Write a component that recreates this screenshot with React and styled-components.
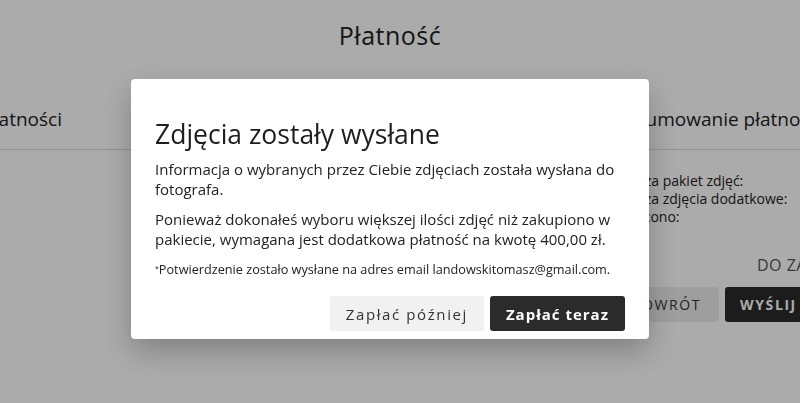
import React from 'react'
import styled, { createGlobalStyle } from 'styled-components'

const GlobalStyle = createGlobalStyle`
    html, body {
        margin: 0;
        padding: 0;
        background: #ffffff;
        overflow: hidden;
    }
    body {
        font-family: "Open Sans", "Liberation Sans", sans-serif;
        color: #222222;
    }
`;

const StyledPage = styled.div`
    width: 1020px;
    height: 403px;
    margin-left: -120px;
    display: flex;
    flex-direction: column;
`;

const StyledPageTitle = styled.h1`
    margin: 18px 0 0;
    font-size: 25px;
    font-weight: 500;
    letter-spacing: 0.5px;
    text-align: center;
    color: #222;
`;

const StyledTabs = styled.div`
    display: grid;
    grid-template-columns: 300px 1fr 300px;
    margin-top: 54px;
    border-bottom: 1px solid #dcdcdc;
    padding-bottom: 17px;
`;

const StyledTab = styled.div`
    font-size: 19px;
    color: #222;
    text-align: ${({ align }) => align};
    padding: ${({ align }) => align === 'right' ? '0 118px 0 0' : '0 0 0 2px'};
`;

const StyledSummary = styled.div`
    margin: 22px 0 0 728px;
    display: flex;
    flex-direction: column;
`;

const StyledSummaryRow = styled.div`
    font-size: 14px;
    line-height: 18px;
    color: #222;
`;

const StyledDue = styled.div`
    margin: 28px 0 0 149px;
    font-size: 16px;
    letter-spacing: 0.5px;
    color: #555;
`;

const StyledPageActions = styled.div`
    display: flex;
    gap: 6px;
    margin: 11px 0 0 6px;
`;

const StyledPageButton = styled.button`
    height: 35px;
    padding: 0 ${({ dark }) => dark ? '15px' : '18px'};
    border: none;
    border-radius: 3px;
    font-family: inherit;
    font-size: 14px;
    font-weight: ${({ dark }) => dark ? 700 : 500};
    letter-spacing: 1.6px;
    background: ${({ dark }) => dark ? '#2b2b2b' : '#ececec'};
    color: ${({ dark }) => dark ? '#ffffff' : '#333'};
`;

const StyledOverlay = styled.div`
    position: fixed;
    inset: 0;
    background: rgba(0, 0, 0, 0.33);
    display: flex;
    justify-content: center;
    align-items: flex-start;
    padding-top: 79px;
`;

const StyledModal = styled.div`
    box-sizing: border-box;
    width: 518px;
    margin-left: -20px;
    padding: 38px 24px 8px;
    background: #ffffff;
    border-radius: 4px;
    box-shadow: 0 12px 30px rgba(0, 0, 0, 0.25);
`;

const StyledModalTitle = styled.h2`
    margin: 0 0 8px;
    font-size: 26.5px;
    font-weight: 500;
    line-height: 34px;
    color: #1e1e1e;
`;

const StyledText = styled.p`
    margin: 0 0 10px;
    font-size: 15px;
    line-height: 20px;
    color: #222;
`;

const StyledNote = styled.p`
    margin: 12px 0 0;
    font-size: 12.7px;
    line-height: 16px;
    color: #222;
    sup {
        font-size: 7px;
        vertical-align: top;
    }
`;

const StyledModalActions = styled.div`
    display: flex;
    justify-content: flex-end;
    gap: 6px;
    margin-top: 19px;
`;

const StyledModalButton = styled.button`
    height: 35px;
    padding: 0 16px;
    border: none;
    border-radius: 3px;
    font-family: inherit;
    font-size: 15px;
    font-weight: ${({ primary }) => primary ? 700 : 500};
    letter-spacing: ${({ primary }) => primary ? '1px' : '1.6px'};
    background: ${({ primary }) => primary ? '#2b2b2b' : '#f1f1f1'};
    color: ${({ primary }) => primary ? '#ffffff' : '#333'};
`;

const App = () => {
    return (
        <>
            <GlobalStyle />
            <StyledPage>
                <StyledPageTitle>Płatność</StyledPageTitle>
                <StyledTabs>
                    <StyledTab align="right">Metoda płatności</StyledTab>
                    <StyledTab align="center">Wybór zdjęć</StyledTab>
                    <StyledTab align="left">Podsumowanie płatności</StyledTab>
                </StyledTabs>
                <StyledSummary>
                    <StyledSummaryRow>Cena za pakiet zdjęć:</StyledSummaryRow>
                    <StyledSummaryRow>Cena za zdjęcia dodatkowe:</StyledSummaryRow>
                    <StyledSummaryRow>Zapłacono:</StyledSummaryRow>
                    <StyledDue>DO ZAPŁATY</StyledDue>
                    <StyledPageActions>
                        <StyledPageButton>POWRÓT</StyledPageButton>
                        <StyledPageButton dark>WYŚLIJ</StyledPageButton>
                    </StyledPageActions>
                </StyledSummary>
            </StyledPage>
            <StyledOverlay>
                <StyledModal>
                    <StyledModalTitle>Zdjęcia zostały wysłane</StyledModalTitle>
                    <StyledText>Informacja o wybranych przez Ciebie zdjęciach została wysłana do fotografa.</StyledText>
                    <StyledText>Ponieważ dokonałeś wyboru większej ilości zdjęć niż zakupiono w pakiecie, wymagana jest dodatkowa płatność na kwotę 400,00 zł.</StyledText>
                    <StyledNote><sup>*</sup>Potwierdzenie zostało wysłane na adres email landowskitomasz@gmail.com.</StyledNote>
                    <StyledModalActions>
                        <StyledModalButton>Zapłać później</StyledModalButton>
                        <StyledModalButton primary>Zapłać teraz</StyledModalButton>
                    </StyledModalActions>
                </StyledModal>
            </StyledOverlay>
        </>
    )
}

export default App
